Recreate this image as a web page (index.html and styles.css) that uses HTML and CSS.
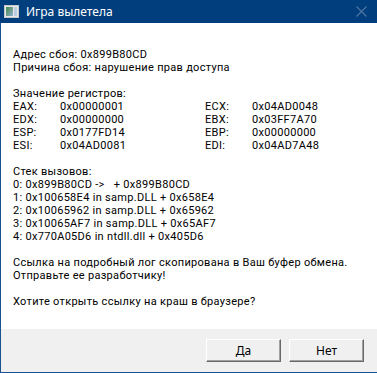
FILE: index.html
```html
<!DOCTYPE html>
<html lang="ru">

<head>
    <meta charset="UTF-8">
    <meta name="viewport" content="width=device-width, initial-scale=1.0">
    <title>Игра вылетела</title>
    <link rel="stylesheet" href="styles.css">
</head>

<body>
    <div class="window">
        <div class="titlebar">
            <svg class="app-icon" width="15" height="13" viewBox="0 0 15 13">
                <defs>
                    <linearGradient id="pic" x1="0" y1="0" x2="1" y2="1">
                        <stop offset="0" stop-color="#3f8a55" />
                        <stop offset="0.5" stop-color="#6e9c8a" />
                        <stop offset="1" stop-color="#8fb5d8" />
                    </linearGradient>
                </defs>
                <rect x="0.5" y="0.5" width="14" height="12" fill="#e8e8e8" stroke="#c8c8c8" />
                <rect x="2" y="2" width="7" height="9" fill="url(#pic)" />
                <rect x="10" y="2" width="3" height="9" fill="#b9cde0" />
            </svg>
            <span class="title">Игра вылетела</span>
            <svg class="close" width="11" height="11" viewBox="0 0 11 11">
                <path d="M0.5 0.5 L10.5 10.5 M10.5 0.5 L0.5 10.5" stroke="#4f77a3" stroke-width="1.1" fill="none" />
            </svg>
        </div>
        <div class="content">
            <p>Адрес сбоя: 0x899B80CD<br>Причина сбоя: нарушение прав доступа</p>
            <div class="regs-title">Значение регистров:</div>
            <div class="regs">
                <span>EAX:</span><span>0x00000001</span><span>ECX:</span><span>0x04AD0048</span>
                <span>EDX:</span><span>0x00000000</span><span>EBX:</span><span>0x03FF7A70</span>
                <span>ESP:</span><span>0x0177FD14</span><span>EBP:</span><span>0x00000000</span>
                <span>ESI:</span><span>0x04AD0081</span><span>EDI:</span><span>0x04AD7A48</span>
            </div>
            <p class="stack">Стек вызовов:
0: 0x899B80CD -&gt;   + 0x899B80CD
1: 0x100658E4 in samp.DLL + 0x658E4
2: 0x10065962 in samp.DLL + 0x65962
3: 0x10065AF7 in samp.DLL + 0x65AF7
4: 0x770A05D6 in ntdll.dll + 0x405D6</p>
            <p>Ссылка на подробный лог скопирована в Ваш буфер обмена.<br>Отправьте ее разработчику!</p>
            <p>Хотите открыть ссылку на краш в браузере?</p>
        </div>
        <div class="footer">
            <button class="btn">Да</button>
            <button class="btn">Нет</button>
        </div>
    </div>
</body>

</html>
```

FILE: styles.css
```css
body {
    margin: 0;
    background-color: #fff;
    font-family: Roboto, "Noto Sans", sans-serif;
    font-size: 11px;
    letter-spacing: 0.3px;
    color: #000;
}

.window {
    width: 377px;
    height: 373px;
    box-sizing: border-box;
    border-left: 1px solid #1a5190;
    border-bottom: 1px solid #1a5190;
    display: flex;
    flex-direction: column;
}

.titlebar {
    height: 23px;
    margin-left: -1px;
    background-color: #003e7d;
    display: flex;
    align-items: center;
    padding-left: 4px;
}

.app-icon {
    flex: none;
}

.title {
    margin-left: 7px;
    color: #fff;
    font-family: "Noto Sans", sans-serif;
    font-size: 12px;
    letter-spacing: 0;
    flex: 1;
}

.close {
    margin-right: 10px;
}

.content {
    flex: 1;
    padding: 25px 12px 0 12px;
    line-height: 13px;
}

.content p {
    margin: 0 0 13px 0;
}

.regs {
    display: grid;
    grid-template-columns: 47px 145px 47px auto;
    margin-bottom: 13px;
}

.stack {
    white-space: pre;
}

.footer {
    height: 43px;
    background-color: #f0f0f0;
    display: flex;
    justify-content: flex-end;
    align-items: flex-start;
    gap: 8px;
    padding: 10px 13px 0 0;
    box-sizing: border-box;
}

.btn {
    width: 75px;
    height: 23px;
    background-color: #f0f0f0;
    border: 1px solid;
    border-color: #fff #696969 #696969 #fff;
    box-shadow: inset -1px -1px 0 #a0a0a0;
    font-family: "Noto Sans", sans-serif;
    font-size: 12px;
    color: #000;
    padding: 0;
}
```
